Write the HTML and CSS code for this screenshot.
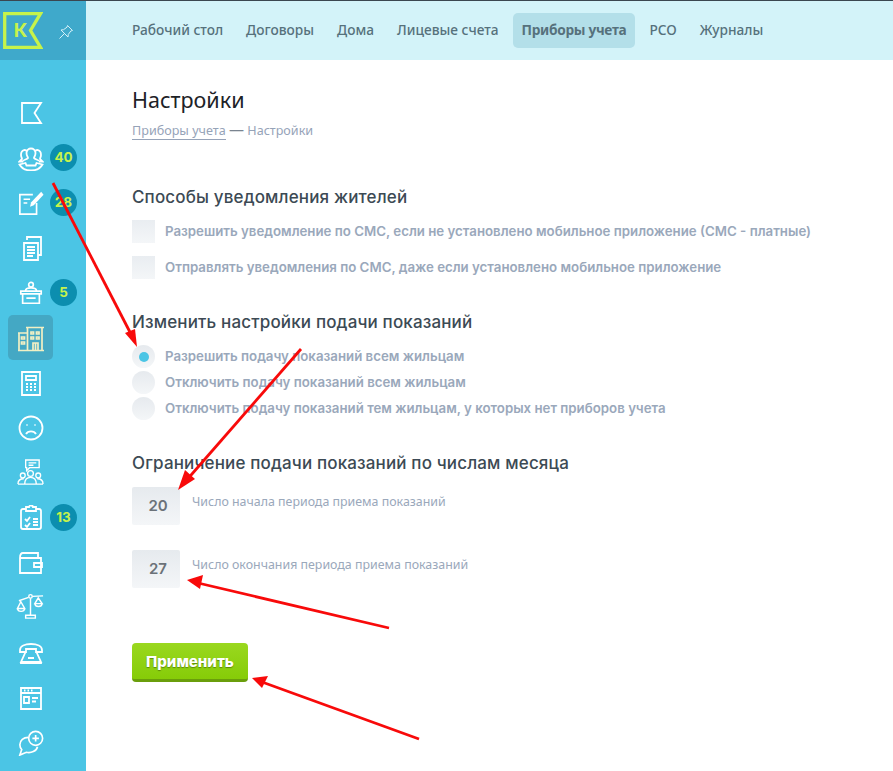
FILE: index.html
```html
<!DOCTYPE html>
<html lang="ru">
<head>
<meta charset="utf-8">
<title>Настройки</title>
<link rel="stylesheet" href="styles.css">
</head>
<body>
<div class="app">
  <aside class="sidebar">
    <div class="brand">
      <svg class="logo" viewBox="0 0 40 37" width="40" height="37"><path d="M1.700 1.700H37.500L27.500 18.500L37.500 35.300H1.700Z" fill="none" stroke="#c6f34b" stroke-width="3.300"/><text x="17.500" y="24.500" text-anchor="middle" class="logo-k">К</text></svg>
      <svg class="pin" viewBox="0 0 16 16" width="16" height="16"><path d="M9.500 1.500L14.500 6.500L12.800 7L10.300 10.500L10 13L3 6L5.500 5.700L9 3.200ZM6 10L1.500 14.500" fill="none" stroke="#d5f1f8" stroke-width="1"/></svg>
    </div>
    <nav class="side-nav">
      <a class="side-item"><svg class="ico" viewBox="0 0 26 26"><path d="M4 3H23L16.500 13L23 23H4Z"/></svg></a>
      <a class="side-item"><svg class="ico" viewBox="0 0 26 26"><path d="M3 10C3 4 9 4 9 7M23 10C23 4 17 4 17 7M8.500 8C8.500 2 17.500 2 17.500 8C17.500 11 16 12 16 13C17 14.500 20 14.500 21 16M5 16C6 14.500 9 14.500 10 13C10 12 8.500 11 8.500 8M3 10C3 12 4 13 4 14L1.500 16.500H5M23 10C23 12 22 13 22 14L24.500 16.500H21M1.500 19.500C4 24 9 25.500 13 25.500C17 25.500 22 24 24.500 19.500L18.500 18L17.500 20.500H8.500L7.500 18Z"/></svg><span class="badge">40</span></a>
      <a class="side-item"><svg class="ico" viewBox="0 0 28 28"><path d="M20 14V26H2V5H16M6 10H13M6 14H10"/><path class="solid" d="M25 2L27.500 5L17 16.500L13 18L14 13.500Z"/></svg><span class="badge">28</span></a>
      <a class="side-item"><svg class="ico" viewBox="0 0 26 26"><path d="M9 5V2H23V20H20M6 8H20V25H6ZM9 12H17M9 15H17M9 18H17M9 21H15"/></svg></a>
      <a class="side-item"><svg class="ico" viewBox="0 0 28 28"><circle cx="14" cy="5" r="2.500"/><path d="M8 12C8 9 11 8.500 14 8.500C17 8.500 20 9 20 12M3 12H25V15H3ZM5 15V25H23V15M9 19.500H19"/></svg><span class="badge">5</span></a>
      <a class="side-item active"><svg class="ico building" viewBox="0 0 28 28"><path d="M9 3.500H27M10.500 3.500V26.500M25 3.500V26.500M1 9H10.500M2 9V26.500M1 26.500H27M16 26.500V19H21V26.500M18.500 19V26.500M14 8H16.500V10H14ZM19.500 8H22V10H19.500ZM14 13H16.500V15H14ZM19.500 13H22V15H19.500ZM4.500 13H7.500V15H4.500ZM4.500 18H7.500V20H4.500Z"/></svg></a>
      <a class="side-item"><svg class="ico" viewBox="0 0 26 26"><path d="M4 2H22V25H4ZM8 6H18V10H8ZM8 14H10M12 14H14M16 14H18M8 17H10M12 17H14M16 17H18M8 20H10M12 20H14M16 20H18"/></svg></a>
      <a class="side-item"><svg class="ico" viewBox="0 0 26 26"><circle cx="13" cy="13" r="11.500"/><path d="M8 19C10 15.500 16 15.500 18 19M8.500 10H9.500M16.500 10H17.500"/></svg></a>
      <a class="side-item"><svg class="ico thin" viewBox="0 0 28 28"><path d="M9 1H23V9H13L10 12V9H9ZM12 4H20M12 6.500H17"/><circle cx="14" cy="15" r="3"/><circle cx="6" cy="17" r="2.500"/><circle cx="22" cy="17" r="2.500"/><path d="M1 26C1 21 4 20.500 7 20.500M27 26C27 21 24 20.500 21 20.500M8 26C8 20 11 19 14 19C17 19 20 20 20 26ZM1 26H27"/></svg></a>
      <a class="side-item"><svg class="ico" viewBox="0 0 26 26"><path d="M8 4H5C3.500 4 3 5 3 6V22C3 23.500 4 24 5 24H21C22.500 24 23 23 23 22V6C23 5 22.500 4 21 4H18M8 2H11C11 0 15 0 15 2H18V6H8ZM7 14L9 16L12 12M7 20L9 22L12 18M15 14H20M15 17H20M15 20H20"/></svg><span class="badge">13</span></a>
      <a class="side-item"><svg class="ico" viewBox="0 0 26 26"><path d="M2 8V23H23V8H2C2 5 3 3 5 3H20V8M16 13H24V17H16Z"/></svg></a>
      <a class="side-item"><svg class="ico thin scales" viewBox="0 0 30 30"><circle cx="15" cy="3.500" r="1.800"/><path d="M3 8L13 4.500M17 3.500L28 3M15 5.500V23M10 23H20V26H10ZM5 9L1.500 16H9ZM1.500 16C2 20 8.500 20 9 16M23 5L19.500 11H27ZM19.500 11C20 15 26.500 15 27 11"/></svg></a>
      <a class="side-item"><svg class="ico" viewBox="0 0 26 26"><path d="M2 10C2 6 7 4 13 4C19 4 24 6 24 10V12H18V9H8V12H2ZM8 11L3 22H23L18 11M3 22V23H23V22M10 18H16"/></svg></a>
      <a class="side-item"><svg class="ico" viewBox="0 0 26 26"><path d="M3 3H23V24H3ZM3 8H23M6 5.500H7.500M9.500 5.500H11M13 5.500H14.500M6 12H11V18H6ZM14 13H20M14 16.500H18"/></svg></a>
      <a class="side-item"><svg class="ico" viewBox="0 0 28 28"><path d="M11 8C6 8 2 11 2 16C2 18 3 20 4 21L2 27L9 24C14 25 20 23 21 18"/><circle cx="19" cy="9" r="7.500"/><path d="M15.500 9H22.500M19 5.500V12.500"/></svg></a>
    </nav>
  </aside>
  <div class="main">
    <header class="topbar">
      <a class="tab">Рабочий стол</a>
      <a class="tab">Договоры</a>
      <a class="tab">Дома</a>
      <a class="tab">Лицевые счета</a>
      <a class="tab current">Приборы учета</a>
      <a class="tab">РСО</a>
      <a class="tab">Журналы</a>
    </header>
    <main class="content">
      <h1 class="title">Настройки</h1>
      <p class="crumbs"><a class="crumb-link">Приборы учета</a> <span class="dash">—</span> Настройки</p>

      <section class="group group-first">
        <h2 class="heading">Способы уведомления жителей</h2>
        <div class="check-list">
          <label class="option"><span class="box"></span>Разрешить уведомление по СМС, если не установлено мобильное приложение (СМС - платные)</label>
          <label class="option"><span class="box"></span>Отправлять уведомления по СМС, даже если установлено мобильное приложение</label>
        </div>
      </section>

      <section class="group group-radio">
        <h2 class="heading">Изменить настройки подачи показаний</h2>
        <div class="radio-list">
          <label class="option"><span class="radio checked"></span>Разрешить подачу показаний всем жильцам</label>
          <label class="option"><span class="radio"></span>Отключить подачу показаний всем жильцам</label>
          <label class="option"><span class="radio"></span>Отключить подачу показаний тем жильцам, у которых нет приборов учета</label>
        </div>
      </section>

      <section class="group group-limit">
        <h2 class="heading">Ограничение подачи показаний по числам месяца</h2>
        <div class="number-list">
          <div class="number-row"><span class="number">20</span><span class="number-label">Число начала периода приема показаний</span></div>
          <div class="number-row"><span class="number">27</span><span class="number-label">Число окончания периода приема показаний</span></div>
        </div>
      </section>

      <button class="apply" type="button">Применить</button>
    </main>
  </div>
</div>
<svg class="arrows" viewBox="0 0 893 771" width="893" height="771">
  <g stroke="#f80a0a" stroke-width="2.800" fill="#f80a0a">
    <path d="M53 183L133 338"/><path d="M137 347L125 333L135 329Z" stroke="none"/>
    <path d="M301 349L185 482"/><path d="M178 490L185 470L195 479Z" stroke="none"/>
    <path d="M389 628L198 583"/><path d="M187 580L203 575L200 589Z" stroke="none"/>
    <path d="M419 739L262 682"/><path d="M252 678L268 676L262 688Z" stroke="none"/>
  </g>
</svg>
</body>
</html>
```
FILE: styles.css
```css
* { box-sizing: border-box; }
html, body { margin: 0; padding: 0; }
body {
  width: 893px;
  height: 771px;
  overflow: hidden;
  position: relative;
  background: #fff;
  font-family: "Noto Sans", sans-serif;
}
.app { display: flex; height: 771px; border-top: 1px solid #3a4650; }
.sidebar { width: 86px; flex: none; background: #4bc5e5; display: flex; flex-direction: column; }
.brand {
  height: 59px;
  background: #3fa9cb;
  display: flex;
  align-items: flex-start;
  padding: 11px 0 0 3px;
  gap: 15px;
}
.pin { margin-top: 12px; }
.logo-k { font: 700 19px "Inter", sans-serif; fill: #c6f34b; }
.side-nav { display: flex; flex-direction: column; padding-top: 30px; }
.side-item {
  position: relative;
  height: 45px;
  width: 45px;
  margin-left: 8px;
  display: flex;
  align-items: center;
  justify-content: center;
  border-radius: 5px;
}
.side-item.active { background: #44a8c4; }
.ico { width: 26px; height: 26px; fill: none; stroke: #fff; stroke-width: 1.800; }
.ico.thin { stroke-width: 1.400; width: 27px; height: 27px; }
.ico.scales { stroke-width: 1.500; width: 29px; height: 29px; }
.ico.building { stroke: #f2f0c4; stroke-width: 1.700; width: 28px; height: 28px; }
.ico .solid { fill: #fff; stroke: none; }
.badge {
  position: absolute;
  left: 42px;
  top: 9px;
  width: 27px;
  height: 27px;
  border-radius: 50%;
  background: #0c8eaf;
  color: #c6f34b;
  font: 700 13.5px/27px "Inter", sans-serif;
  text-align: center;
}
.main { flex: 1; min-width: 0; }
.topbar {
  height: 59px;
  background: #d3f3f9;
  display: flex;
  align-items: center;
  padding: 0 0 0 37px;
  gap: 5px;
}
.tab {
  height: 35px;
  line-height: 33px;
  padding: 0 9px;
  font-size: 13.700px;
  font-weight: 500;
  color: #56717c;
  border-radius: 5px;
}
.tab.current { background: #b3dfe9; font-weight: 700; letter-spacing: -.3px; }
.content { padding: 26px 0 0 46px; }
.title { margin: 0; font-size: 21.500px; font-weight: 400; line-height: 28px; color: #1d2226; }
.crumbs { margin: 8px 0 0; font-size: 12.600px; line-height: 18px; color: #96a3b8; }
.crumb-link { border-bottom: 1px solid #96a3b8; padding-bottom: 0; }
.dash { color: #7a8490; font-size: 15px; line-height: 1; }
.heading { margin: 0; font: 500 17px/22px "Inter", sans-serif; letter-spacing: .15px; color: #3c4a54; }
.group-first { margin-top: 46px; }
.group-radio { margin-top: 32px; }
.group-limit { margin-top: 32px; }
.option {
  display: flex;
  align-items: center;
  gap: 10px;
  font: 600 13.270px/23px "Inter", sans-serif;
  color: #9aa8bb;
}
.check-list { display: flex; flex-direction: column; gap: 13px; margin-top: 12px; }
.box { width: 23px; height: 23px; background: linear-gradient(#e9edf1, #f4f6f8); flex: none; }
.radio-list { display: flex; flex-direction: column; gap: 3px; margin-top: 12px; }
.radio { width: 23px; height: 23px; border-radius: 50%; background: linear-gradient(#e6eaee, #f4f6f8); flex: none; position: relative; }
.radio.checked::after {
  content: "";
  position: absolute;
  left: 7px;
  top: 7px;
  width: 10px;
  height: 10px;
  border-radius: 50%;
  background: #4bc5e5;
}
.number-list { display: flex; flex-direction: column; gap: 25px; margin-top: 13px; }
.number-row { display: flex; gap: 12px; }
.number {
  width: 48px;
  height: 38px;
  padding-left: 4px;
  border-radius: 2px;
  background: linear-gradient(#e6eaee, #f4f6f8);
  font: 600 15px/38px "Inter", sans-serif;
  color: #6b7279;
  text-align: center;
}
.number-label { font-size: 12.400px; line-height: 18px; color: #9aa8bb; margin-top: 6px; }
.apply {
  display: block;
  margin-top: 55px;
  width: 116px;
  height: 39px;
  border: 0;
  border-bottom: 3px solid #6a9e0c;
  border-radius: 4px;
  background: linear-gradient(#9ad81f, #86cc08);
  color: #fff;
  font: 800 15px "Inter", sans-serif;
  text-shadow: 0 1px 1px rgba(60,90,0,.6);
}
.arrows { position: absolute; left: 0; top: 0; pointer-events: none; }
```
